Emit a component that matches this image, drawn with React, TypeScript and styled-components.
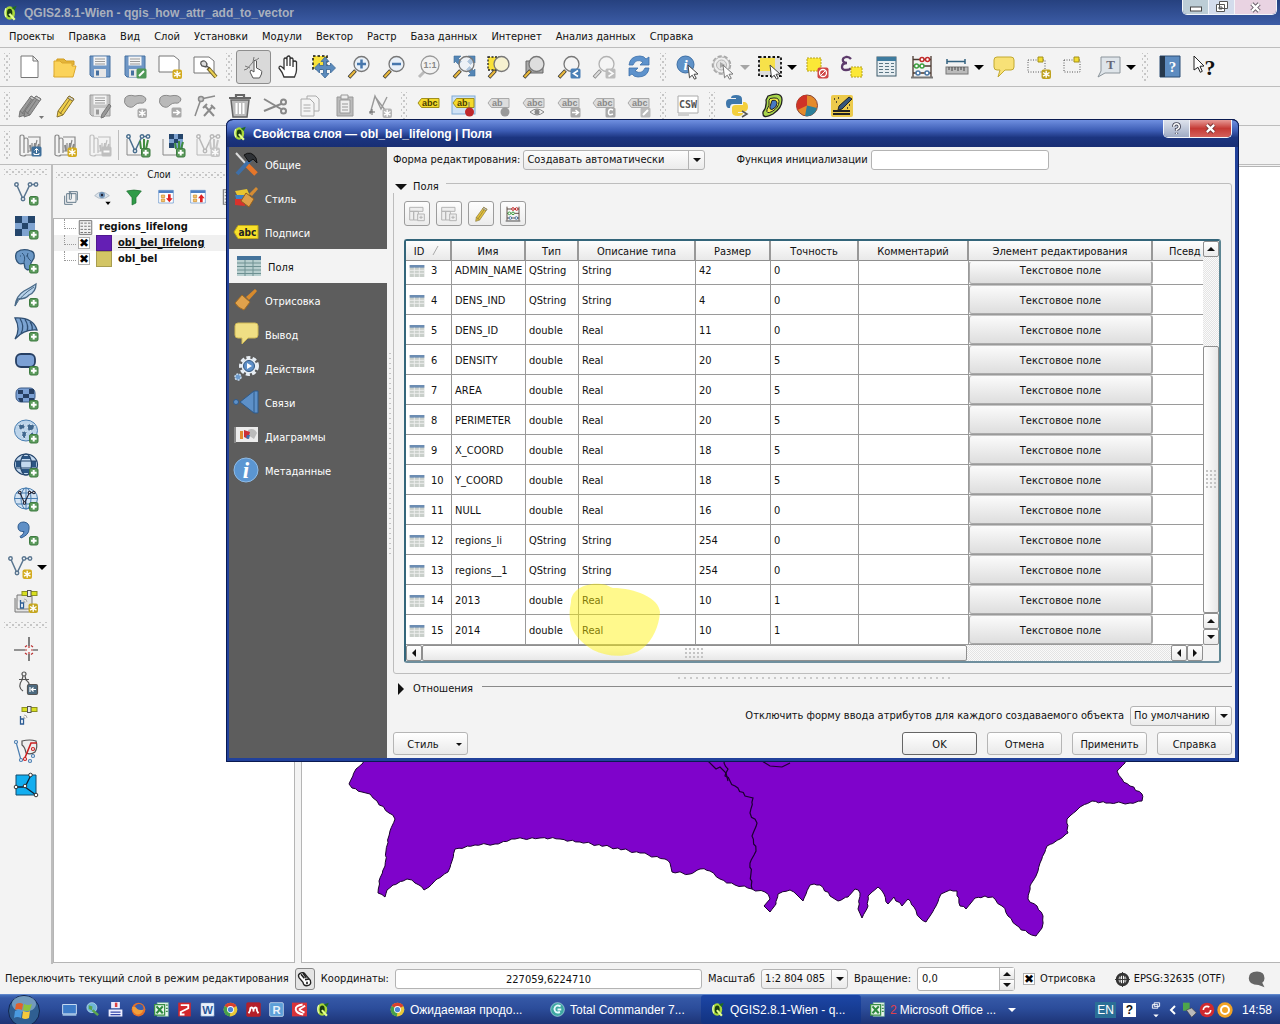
import React, { ReactNode } from "react";
import styled, { createGlobalStyle, css } from "styled-components";

const Global = createGlobalStyle`
  * { box-sizing: border-box; }
  body { margin: 0; background: #f3f3f3; }
  body, button, input, select {
    font-family: "DejaVu Sans Condensed", "DejaVu Sans", "Noto Sans", sans-serif;
    font-size: 11px;
    line-height: 14px;
    color: #111;
  }
  body { font-stretch: condensed; }
  button, input, select { font-stretch: inherit; margin: 0; }
`;

/* ---------- icon drawings, all on a 24 x 24 grid ---------- */

const Svg = styled.svg<{ $size?: number }>`
  width: ${(p) => p.$size ?? 24}px;
  height: ${(p) => p.$size ?? 24}px;
  flex: none;
  display: block;
  overflow: visible;
`;

const plus = (
  <g>
    <rect x="15.5" y="15.5" width="8.5" height="8.5" rx="1.5" fill="#5b9a5b" stroke="#3d7a40" />
    <path d="M19.7 17v5.6M17 19.8h5.6" stroke="#fff" strokeWidth="2" />
  </g>
);
const star = (c = "#d3ab1f") => (
  <g>
    <rect x="14.5" y="14.5" width="9.5" height="9.5" rx="2" fill={c} />
    <path d="M19.2 15.8v7M16 17.5l6.5 3.6M16 21.1l6.5-3.6" stroke="#fff" strokeWidth="1.4" />
  </g>
);
const badge = (c: string, inner: ReactNode) => (
  <g>
    <rect x="13.5" y="13.5" width="10" height="10" rx="1.5" fill={c} />
    {inner}
  </g>
);
const lens = (ring: string, fill: string, handle: string) => (
  <g>
    <path d="M8.5 15.5L2 22.500" stroke="#333" strokeWidth="3.600" />
    <path d="M8 16L2.500 22" stroke={handle} strokeWidth="2.200" />
    <circle cx="14.500" cy="9" r="7.500" fill={fill} stroke={ring} strokeWidth="1.300" />
  </g>
);
const cursor = <path d="M12 10l10 9-4 .3 2.300 4-1.800.9-2.300-4-2.700 2.600z" fill="#fff" stroke="#444" strokeWidth="1" />;
const abcTag = (fill: string, stroke: string, ink: string, text = "abc") => (
  <g>
    <path d="M1 9l3.500-4.500H22v9H4.500z" fill={fill} stroke={stroke} />
    <text x="5" y="12" fontSize="9" fontWeight="700" fontFamily="Liberation Sans, sans-serif" fill={ink}>{text}</text>
  </g>
);
const mapStack = (c: string) => (
  <g fill="none" stroke={c} strokeWidth="1.200">
    <path d="M2 22V4q0-2 2-2t2 2v16M6 7q0-2 2-2t2 2v13M2 22q4 2 6 0h12M10 4h12v14H10M14 17V10M17 16l2-9" />
    <path d="M13 18l-1-6M16 18l1-8M19 18l2-7" strokeWidth="2" />
  </g>
);
const vee = (c: string) => (
  <g fill="#fff" stroke={c} strokeWidth="1.500">
    <path d="M2.500 3.500L9 18 16 3.500h6" fill="none" />
    <circle cx="2.500" cy="3.500" r="1.700" /><circle cx="9" cy="18" r="1.700" />
    <circle cx="16" cy="3.500" r="1.700" /><circle cx="22" cy="3.500" r="1.700" />
  </g>
);
const sat = (
  <g>
    <rect x="8" y="2.500" width="15" height="4" fill="#d9e021" stroke="#8d9020" />
    <rect x="13.500" y="1.500" width="3.500" height="6" fill="#eee" stroke="#555" />
    <path d="M10 10q3 0 3 3M9 12q2 0 2 2" fill="none" stroke="#aaa" />
    <path d="M6.500 11v8h3v-5h-3" fill="#fff" stroke="#2d5c94" strokeWidth="1.300" />
  </g>
);
const pencil = (a: string, b: string) => (
  <g>
    <path d="M16 2l5 3-11 16-6 2 1-6z" fill={a} stroke={b} />
    <path d="M18 3.500L7 20M5 17l5 4" stroke={b} fill="none" />
    <path d="M16 2l5 3-1.500 2-5-3z" fill="#ccc" stroke={b} />
  </g>
);
const floppy = (a: string, b: string) => (
  <g>
    <path d="M2 1h20v21H4l-2-2z" fill={a} stroke={b} />
    <rect x="5.500" y="1.500" width="13" height="9" fill="#f4f4f4" />
    <path d="M7 4h10M7 6.500h10M7 9h10" stroke="#999" />
    <rect x="6" y="14" width="12" height="8" fill="#e6e6e6" /><rect x="8" y="15.500" width="3" height="5" fill={b} />
  </g>
);
const blob = <path d="M2 4q3-4 10-2 9-2 11 3-1 5-6 4-3 0-5 2-3 4-8 1-4-3-2-8z" fill="#b9b9b9" stroke="#8b8b8b" />;
const globe = (
  <g fill="none" stroke="#4a7eb0">
    <ellipse cx="12" cy="11.500" rx="11.500" ry="10.500" fill="#d3e3f3" />
    <ellipse cx="12" cy="11.500" rx="5" ry="10.500" /><path d="M0 11.500h24M2 6h20M2 17h20M12 1v21" />
  </g>
);
const checker = (
  <g>
    <path d="M1 1h20v20H1z" fill="#7fa3d0" />
    <path d="M1 1h7v7H1zM14 1h7v7h-7zM8 8h6v6H8zM1 14h7v7H1zM8 1h0z" fill="#24456b" />
  </g>
);
const abacus = (
  <g fill="none">
    <path d="M3 1v21M21 1v21M3 4.500h18M3 11h18M3 18h18" stroke="#4c3b32" strokeWidth="1.300" />
    <g fill="#fff" strokeWidth="1.500">
      <g stroke="#c22a2a"><circle cx="12" cy="4.500" r="2" /><circle cx="17.500" cy="4.500" r="2" /></g>
      <g stroke="#3fa041"><circle cx="6.500" cy="11" r="2" /><circle cx="12" cy="11" r="2" /></g>
      <g stroke="#4b78a6"><circle cx="8" cy="18" r="2" /><circle cx="17" cy="18" r="2" /></g>
    </g>
    <path d="M1 22.500h22" stroke="#777" strokeWidth="2" />
  </g>
);
const gridTable = (
  <g>
    <rect x="2" y="2" width="19" height="19" fill="#e7eef2" stroke="#3c5a6b" />
    <path d="M2 2h19v4H2z" fill="#3e7b9e" />
    <path d="M4 8.500h4M10 8.500h4M16 8.500h3M4 11.500h4M10 11.500h4M16 11.500h3M4 14.500h4M10 14.500h4M16 14.500h3M4 17.500h4M10 17.500h4M16 17.500h3" stroke="#5b7684" strokeWidth="1.200" />
  </g>
);
const balloon = <path d="M5 2h14q3 0 3 3v7q0 3-3 3h-6l-7 7 2-7H5q-3 0-3-3V5q0-3 3-3z" fill="#f8e177" stroke="#c2a92f" />;
const qgis = (
  <g>
    <ellipse cx="11.500" cy="12" rx="8" ry="10" fill="#a9d83a" />
    <ellipse cx="11.500" cy="12" rx="4" ry="6.500" fill="#1b3d12" />
    <path d="M6 5q-3 6 0 13" fill="none" stroke="#eaffb0" strokeWidth="2" />
    <path d="M11 13l8 9" stroke="#e4ff8c" strokeWidth="3.500" /><path d="M14 4l8-3-3 7z" fill="#1f6b23" />
  </g>
);
const chrome = (
  <g>
    <circle cx="12" cy="12" r="11" fill="#e8c93a" />
    <path d="M12 12L2.500 6.500A11 11 0 0 1 21.500 6.500z" fill="#d8402f" />
    <path d="M12 12L2.500 6.500A11 11 0 0 0 11 23z" fill="#47a04b" />
    <circle cx="12" cy="12" r="5.500" fill="#fff" /><circle cx="12" cy="12" r="4.200" fill="#4a84d8" />
  </g>
);
const letterTile = (bg: string, fg: string, t: string) => (
  <g>
    <rect x="1" y="1" width="22" height="22" rx="2" fill={bg} stroke={fg} />
    <text x="12" y="18.500" fontSize="18" fontWeight="700" textAnchor="middle" fontFamily="Liberation Sans, sans-serif" fill={fg}>{t}</text>
  </g>
);

const drawings: Record<string, ReactNode> = {
  qgis, pan: pencil("#f0cf4a", "#8a7430"), chrome, abacus, balloon,
  page: <path d="M3 1h12l5 5v16.500H3zM15 1v5h5" fill="#fff" stroke="#777" />,
  folder: <g><path d="M1 22L4 4h7l2 2h8v4" fill="#e4b63a" stroke="#d19c20" /><path d="M1 22V6h6l2 2h10v3h4l-3 11z" fill="#fbd35a" stroke="#dba72c" /></g>,
  save: floppy("#6f97c6", "#46709f"),
  saveAs: <g>{floppy("#6f97c6", "#46709f")}{badge("#4f9857", <path d="M16 21l5-5" stroke="#fff" strokeWidth="2" />)}</g>,
  composerNew: <g><path d="M1 1h15l5 4v12H1z" fill="#fff" stroke="#777" />{star()}</g>,
  composer: <g><path d="M1 2h15l5 4v12H1z" fill="#fff" stroke="#777" /><path d="M8 7q4-3 6 2l-1 3-4-1q-2-2-1-4zM14 11l3 3" fill="#ddd" stroke="#555" strokeWidth="1.300" /><path d="M15 13l8 9" stroke="#6a5a25" strokeWidth="4" /><path d="M16 14l7 8" stroke="#e9cf52" strokeWidth="2" /></g>,
  touch: <g fill="#fff" stroke="#555"><path d="M11 23l-3-6 1-2 3 2V6q1-2 2.500 0v7l4 2q2 1 1 4l-2 4z" /><path d="M2 15l3-1 6-7 1-5M8 13L3 11M13 6l4-3" fill="none" stroke="#777" /></g>,
  hand: <path d="M7 22q-1-4-5-9 0-3 3-1l2 2V4q1-2 3 0V2q2-2 3 0v2q2-2 3 0v3q2-2 3.500 0V15q0 3-2 7z M10 4v7M13 4v7M16 6v6" fill="#fff" stroke="#333" strokeWidth="1.300" />,
  panSel: <g><path d="M1 1h14v13H1z" fill="#f8e13a" stroke="#111" strokeDasharray="2.500 2" strokeWidth="1.500" /><path d="M13 2l4 4.500h-2.500v4h4V8l5 5-5 5v-3.500h-4v4H17l-4 4.500-4-4.500h2.500v-4h-4V18l-5-5 5-5v2.500h4v-4H9z" fill="#5b8bbd" stroke="#3b6796" strokeWidth=".8" /></g>,
  zoomIn: <g>{lens("#777", "#e9f0f8", "#e9b83c")}<path d="M14.500 4.500v9M10 9h9" stroke="#4777ad" strokeWidth="2.500" /></g>,
  zoomOut: <g>{lens("#777", "#e9f0f8", "#e9b83c")}<path d="M10 9h9" stroke="#4777ad" strokeWidth="2.500" /></g>,
  zoom1: <g><path d="M8 16L2 22" stroke="#bbb" strokeWidth="3" /><circle cx="13" cy="10" r="9" fill="#f2f2f2" stroke="#999" strokeWidth="1.300" /><text x="13" y="13" fontSize="9" fontWeight="700" textAnchor="middle" fontFamily="Liberation Sans, sans-serif" fill="#888">1:1</text></g>,
  zoomFull: <g><path d="M2 1h7L6.500 3.500l3 3-3 3-3-3L2 8zM23 1h-7l2.500 2.500-3 3 3 3 3-3L23 8zM23 21h-7l2.500-2.500-4-4 3-3 4 4L23 14z" fill="#5486b6" stroke="#3c6b98" strokeWidth=".6" />{lens("#777", "#e9f0f899", "#e9b83c")}</g>,
  zoomSel: <g><path d="M1 2h12v13H1z" fill="#f8e13a" stroke="#222" strokeDasharray="2 1.500" strokeWidth="1.300" />{lens("#777", "#f6f1d0", "#e9b83c")}</g>,
  zoomLayer: <g><path d="M4 6h17v12H4z" fill="#aaa" stroke="#666" />{lens("#777", "#dedede", "#e9b83c")}</g>,
  zoomLast: <g>{lens("#777", "#f4f4f4", "#e9b83c")}{badge("#4a7fb5", <path d="M21 15.500l-4.500 3 4.500 3" stroke="#fff" strokeWidth="1.600" fill="none" />)}</g>,
  zoomNext: <g opacity=".6">{lens("#888", "#f7f7f7", "#ccc")}{badge("#999", <path d="M16.500 15.500l4.500 3-4.500 3" stroke="#fff" strokeWidth="1.600" fill="none" />)}</g>,
  refresh: <g fill="#5d92cc" stroke="#3d70aa" strokeWidth=".8"><path d="M2 10Q3 1 13 1q4 0 6 3l3-2v8h-9l3-3q-7-4-10 3z" /><path d="M22 13q-1 9-11 9-4 0-6-3l-3 2v-8h9l-3 3q7 4 10-3z" /></g>,
  identify: <g><circle cx="9.500" cy="9.500" r="8.500" fill="#5f92c8" stroke="#3b6ea5" /><text x="9.500" y="15" fontSize="15" fontStyle="italic" fontWeight="700" textAnchor="middle" fontFamily="Liberation Serif, serif" fill="#fff">i</text>{cursor}</g>,
  gear: <g opacity=".7"><circle cx="10.500" cy="10" r="8.500" fill="none" stroke="#888" strokeWidth="2.500" strokeDasharray="4 2" /><circle cx="10.500" cy="10" r="8" fill="#eee" stroke="#999" /><circle cx="10.500" cy="10" r="5" fill="#ddd" stroke="#999" /><path d="M9 7l5 3-5 3z" fill="#888" />{cursor}</g>,
  select: <g><path d="M1 2h22v19H1z" fill="#ddd" stroke="#111" strokeDasharray="2.500 2" strokeWidth="1.800" /><path d="M2 3h15v13H2z" fill="#f7e14a" />{cursor}</g>,
  deselect: <g><path d="M2 3h14v13H2z" fill="#fbe837" stroke="#b5a01f" strokeDasharray="2 1" /><rect x="12.500" y="12.500" width="11" height="11" rx="2" fill="#cf4444" /><circle cx="18" cy="18" r="3.500" fill="none" stroke="#fff" strokeWidth="1.300" /><path d="M15.500 20.500l5-5" stroke="#fff" /></g>,
  expr: <g><path d="M11 4Q9 1.500 6 2 2 3 3 6q1 2 4 2-5 0-5 4 0 3 4 3 4 0 5-2" fill="none" stroke="#5d3b6b" strokeWidth="2.300" /><path d="M11 12h11v10H11z" fill="#fbe837" stroke="#b5a01f" strokeDasharray="2 1" /></g>,
  table: gridTable,
  measure: <g><path d="M2 6.500h18M2 4v5M20 4v5" stroke="#33617f" strokeWidth="1.500" /><rect x="1" y="12" width="22" height="7" fill="#bbb" stroke="#777" /><path d="M4 12v3M7 12v4M10 12v3M13 12v4M16 12v3M19 12v4" stroke="#444" /></g>,
  bookmarkNew: <g><path d="M1 5h17v12H1z" fill="none" stroke="#555" strokeDasharray="1 1.500" /><path d="M11 2h5v5h-5z" fill="#f2dc30" stroke="#a28f1b" />{star("#bfa220")}</g>,
  bookmark: <g><path d="M2 5h16v12H2z" fill="none" stroke="#555" strokeDasharray="1 1.500" /><path d="M12 2h5v5h-5z" fill="#f2dc30" stroke="#a28f1b" /></g>,
  textNote: <g><path d="M4 2h19v16H8l-7 4 3-6z" fill="#dfe5ea" stroke="#8b949b" /><text x="13.500" y="14" fontSize="13" fontWeight="700" textAnchor="middle" fontFamily="Liberation Serif, serif" fill="#667">T</text></g>,
  book: <g><path d="M2 1h20v21H2z" fill="#5d8cc0" stroke="#2d4f77" /><path d="M2 1h5v21H2z" fill="#26384c" /><text x="14.500" y="17" fontSize="15" fontWeight="700" textAnchor="middle" fontFamily="Liberation Serif, serif" fill="#fff">?</text></g>,
  whats: <g><path d="M1 1l10 10-4 .3 2.300 5-2 1-2.300-5L1 15z" fill="#fff" stroke="#222" /><text x="17" y="20" fontSize="22" fontWeight="700" textAnchor="middle" fontFamily="Liberation Serif, serif" fill="#111">?</text></g>,

  pencils: <g><g transform="translate(-3 0)">{pencil("#999", "#777")}</g><g transform="translate(2 0)">{pencil("#999", "#777")}</g><path d="M21 22h5l-2.500 3z" fill="#777" /></g>,
  saveEdit: <g>{floppy("#c4c4c4", "#999")}<path d="M21 10l2 2-7 11-3 1 1-4z" fill="#999" stroke="#777" /></g>,
  addFeat: <g>{blob}{star("#aaa")}</g>,
  moveFeat: <g>{blob}{badge("#aaa", <path d="M15 18.500h6M18.500 16l3 2.500-3 2.500" stroke="#fff" strokeWidth="1.500" fill="none" />)}</g>,
  node: <g fill="none" stroke="#8c8c8c" strokeWidth="1.500"><path d="M2 22L8 5l14-3" /><circle cx="8" cy="5" r="2.500" fill="#ccc" /><path d="M12 12l9 10M20 12l-9 10M10 14l4-4M18 11l4 4" strokeWidth="2" /></g>,
  trash: <g fill="#bbb" stroke="#666" strokeWidth="1.500"><path d="M3 6h18l-2 17H5z" /><path d="M1 4h22M8 3V1h8v2" fill="none" strokeWidth="2.200" /><path d="M8.500 9v11M12 9v11M15.500 9v11" stroke="#fff" strokeWidth="2" /></g>,
  cut: <g fill="none" stroke="#888" strokeWidth="2"><path d="M1 5l17 10M1 17l17-7" /><circle cx="20.500" cy="8" r="2.500" /><circle cx="20.500" cy="17" r="2.500" /></g>,
  copy: <g fill="#f4f4f4" stroke="#aaa"><path d="M9 2h9l3 3v12H9z" /><path d="M3 5h9l4 4v13H3zM5.500 11h7M5.500 14h7M5.500 17h7" /></g>,
  paste: <g fill="#eee" stroke="#999"><path d="M4 3h16v19H4z" fill="#bbb" /><path d="M7 6h10v13H7zM9 10h6M9 13h6M9 16h6" /><path d="M8 1h7v4H8z" /></g>,
  vecGrey: <g><path d="M2 20L7 2l6 13 6-12M8 4l12 16" fill="none" stroke="#999" strokeWidth="1.400" /><path d="M1 18h6M4 15v6" stroke="#666" />{star("#b5b5b5")}</g>,
  abc: abcTag("#f4da2c", "#a08f1c", "#4a3d00"),
  abcPin: <g><rect x="0" y="2" width="23" height="18" fill="#cfe2f5" stroke="#7fa9d3" />{abcTag("#f4da2c", "#a08f1c", "#4a3d00", "ab")}<path d="M17 8v8" stroke="#777" /><circle cx="17.500" cy="18" r="4.500" fill="#c0282b" /></g>,
  abcG1: <g>{abcTag("#ddd", "#aaa", "#888", "ab")}<circle cx="18" cy="18" r="4.500" fill="#999" /></g>,
  abcG2: <g>{abcTag("#ddd", "#aaa", "#888")}<path d="M8 18q7-6 14 0-7 6-14 0z" fill="#eee" stroke="#888" /><circle cx="15" cy="18" r="2.500" fill="#888" /></g>,
  abcG3: <g>{abcTag("#ddd", "#aaa", "#888")}{badge("#aaa", <path d="M15 18.500h6M18.500 16l3 2.500-3 2.500" stroke="#fff" strokeWidth="1.500" fill="none" />)}</g>,
  abcG4: <g>{abcTag("#ddd", "#aaa", "#888")}{badge("#aaa", <path d="M21 16q-4-2-4.500 2t4.500 2" stroke="#fff" strokeWidth="1.500" fill="none" />)}</g>,
  abcG5: <g>{abcTag("#ddd", "#aaa", "#888")}{badge("#bbb", <path d="M16 21l5-5" stroke="#fff" strokeWidth="2" />)}</g>,
  csw: <g><path d="M2 2h20v17H2z" fill="#fff" stroke="#aaa" /><path d="M2 21h11" stroke="#aaa" /><text x="12" y="14" fontSize="10" fontWeight="700" textAnchor="middle" fontFamily="DejaVu Sans Mono, monospace" fill="#555">CSW</text></g>,
  python: <g><path d="M11 1q6 0 6 4v5H8q-3 0-3 4H3q-2-1-2-5t4-4h6V4H6q0-3 5-3z" fill="#3f77ab" /><path d="M13 22q-6 0-6-4v-5q1-2 3-2h8V8h2q3 1 3 5t-4 5h-6v1h5q0 3-5 3z" fill="#f3cf3d" /><path d="M17 17l5 3-5 3" fill="none" stroke="#555" strokeWidth="1.500" /></g>,
  heat: <g><path d="M8 2q14-5 14 4 0 8-9 14-11 6-10-2 4-5 3-12z" fill="#a9d64a" stroke="#222" strokeWidth="1.300" /><path d="M10 4.500q9-2 9 3 0 6-7 10-6 3-5-2 3-4 2-9z" fill="#f5ed4b" stroke="#222" /><path d="M12 6.500q5-1 5 3t-5 6q-3 0-2-3z" fill="#4779c4" stroke="#222" /></g>,
  pie: <g><circle cx="12" cy="11.500" r="10.500" fill="#e48a2b" stroke="#843" /><path d="M12 11.500V1A10.500 10.500 0 0 0 2.500 16z" fill="#cf3327" /><path d="M12 11.500L22 14A10.500 10.500 0 0 1 10 22z" fill="#2c7f99" /></g>,
  field: <g><rect x="1" y="1" width="22" height="22" rx="2" fill="#ecca4b" /><path d="M3 17h17M3 20h17" stroke="#222" strokeWidth="2" /><path d="M19 3l3 2-10 10-4 1 1-4z" fill="#35567d" stroke="#222" /><path d="M4 5h1M8 4h1M6 8h1M19 11h1M17 14h1" stroke="#222" strokeWidth="1.500" /></g>,

  mapA: <g>{mapStack("#888")}{badge("#3f6f9a", <path d="M16 20v1.500h5V20M18.500 20v-4M16.500 17.500l2-2 2 2" stroke="#fff" fill="none" />)}</g>,
  mapB: <g>{mapStack("#888")}{star()}</g>,
  mapC: <g opacity=".7">{mapStack("#aaa")}{badge("#aaa", <path d="M15.500 18.500h6" stroke="#fff" strokeWidth="2" />)}</g>,
  grassV: <g><path d="M1 6v16h14" fill="none" stroke="#888" />{vee("#4a6f8e")}<path d="M15 16l-1-8M18 16V6M20 16l2-9" stroke="#3f8c3f" strokeWidth="2" />{plus}</g>,
  grassR: <g><path d="M2 6v16h14" fill="none" stroke="#888" /><path d="M8 1h14v14H8z" fill="#7fa3d0" /><path d="M8 1h5v5H8zM17 1h5v5h-5zM13 6h4v4h-4zM8 10h5v5H8z" fill="#24456b" /><path d="M15 16l-1-6M18 16V8M20 16l2-7" stroke="#3f8c3f" strokeWidth="2" />{plus}</g>,
  grassG: <g opacity=".8"><path d="M1 6v16h14" fill="none" stroke="#aaa" />{vee("#aaa")}<path d="M15 16l-1-8M18 16V6M20 16l2-9" stroke="#bbb" strokeWidth="2" />{star("#bbb")}</g>,

  vector: <g>{vee("#5a7690")}{plus}</g>,
  raster: <g>{checker}{plus}</g>,
  postgis: <g><path d="M3 3q6-4 14-1 4 1 3 7l-3 5-1 6q-3 2-5-1l-1-5q-6 3-8-4-1-5 1-7z" fill="#6b98c6" stroke="#2f5377" strokeWidth="1.300" /><path d="M8 4q4 3 2 9M14 4q-2 4 3 8M6 7h1M12 7h1" fill="none" stroke="#2f5377" /></g>,
  feather: <g><path d="M1 23q1-10 9-15 6-3 12-7 0 8-7 11-3 4-11 4z" fill="#b9d3ea" stroke="#4a6a88" strokeWidth="1.300" /><path d="M1 23Q7 12 20 4" fill="none" stroke="#4a6a88" /></g>,
  mssql: <path d="M1 1q18-1 22 12-13-1-22 9 6-10 0-21zM6 1.500q5 8 1 15M11 2.500q4 6 2 12M16 5q3 4 2 8" fill="#7ca4d2" stroke="#2f4f73" strokeWidth="1.300" />,
  oracle: <rect x="2" y="3" width="19" height="13" rx="5" fill="#7ba0d4" stroke="#263f63" strokeWidth="1.800" />,
  georaster: <g><rect x="2" y="3" width="19" height="14" rx="5" fill="#7ba0d4" stroke="#3b5a86" /><path d="M4 5h5v4H4zM15 4h5v5h-5zM9 9h6v4H9zM4 13h5v4H6zM15 13h5v2l-2 2h-3z" fill="#263f63" /></g>,
  wms: <g><ellipse cx="12" cy="11.500" rx="11.500" ry="10.500" fill="#bcd4ea" stroke="#4a7eb0" /><path d="M4 6l6-1 1 4-5 2zM13 5l8 1-2 5-5 1zM8 12l5 1-2 7-3-3zM16 13l4 1-2 4z" fill="#40678e" stroke="#d9e7f4" strokeDasharray="2 1" /></g>,
  wcs: <g><ellipse cx="12" cy="11.500" rx="11.500" ry="10.500" fill="#c3d8ee" /><path d="M8 3h8v3H8zM2 8h5v6H2zM17 8h5v6h-5zM8 16h8v4H8z" fill="#2b5583" /><g fill="none" stroke="#24456b" strokeWidth="1.200"><ellipse cx="12" cy="11.500" rx="11.500" ry="10.500" /><ellipse cx="12" cy="11.500" rx="5.500" ry="10.500" /><path d="M1 8h22M1 15h22" /></g></g>,
  wfs: <g>{globe}<g transform="translate(4 3) scale(.72)">{vee("#223")}</g></g>,
  comma: <path d="M4 6q0-5 6-5 6 1 5 7 0 6-8 9l-1-1.500q4-2 4-5Q4 11 4 6z" fill="#5f8fc6" stroke="#2f5c8f" />,
  newShape: <g>{vee("#5a7690")}{star()}</g>,
  gpsNew: <g><path d="M3 6h15v14H3zM1 9v14h14" fill="#e3e3e3" stroke="#777" />{sat}{star("#c5a620")}</g>,
  cross: <g fill="none" strokeWidth="1.200"><path d="M15 0v9M15 17v7M0 13h11M19 13h5" stroke="#333" /><path d="M15 9v2M15 15v2M11 13h2M17 13h2M11 10l2-1.500M19 10l-2-1.500M11 16l2 1.500M19 16l-2 1.500" stroke="#b33" /></g>,
  caliper: <g fill="none" stroke="#555" strokeWidth="1.200"><circle cx="10" cy="3" r="2" /><path d="M9 5l-1 4M11 5l1 4M5 8.500h10M8 9q-5 7 1 11M12 9q4 3 3 6" />{badge("#4c6a80", <path d="M16 16v5M22 18.500h-4M19.500 16.500l-2 2 2 2" stroke="#fff" />)}</g>,
  gps: sat,
  topo: <g fill="#fff" strokeWidth="1.200"><path d="M2 3l5 18" stroke="#4a7db0" /><path d="M8 2q8-2 14 0 2 6-1 11-4 3-9 1-1-6-4-8z" fill="#eee" stroke="#555" /><path d="M10 21l7-17h6M12 21" stroke="#c22" fill="none" strokeWidth="1.600" /><g stroke="#4a7db0"><circle cx="2" cy="3" r="1.500" /><circle cx="7" cy="21" r="1.500" /><circle cx="19" cy="17" r="1.500" /><circle cx="16" cy="22" r="1.500" /></g><g stroke="#c22"><circle cx="11" cy="20" r="1.500" /><circle cx="19" cy="10" r="1.500" /></g></g>,
  topology: <g><path d="M2 2h20v20H2z" fill="#12aef0" stroke="#124a6b" /><path d="M2 14h9l6-12M11 14l11 8" stroke="#123" strokeWidth="1.300" fill="none" /><g fill="#fff" stroke="#333"><circle cx="2" cy="14" r="1.800" /><circle cx="11" cy="13" r="1.800" /><circle cx="16.500" cy="2" r="1.800" /><circle cx="22" cy="22" r="1.800" /></g></g>,

  group: <path d="M7 7h14v13H7zM4 10v13h12M10 4h13v13M11 16V6q1-3 3 0v8q0 2-1.500 2" fill="none" stroke="#667c8c" strokeWidth="1.500" />,
  eye: <g><path d="M1 10q10-11 22 0-11 9-22 0z" fill="#dce3ea" stroke="#9aa8b5" /><circle cx="12" cy="9" r="4.500" fill="#6f93b8" /><circle cx="12" cy="9" r="1.800" fill="#223" /><path d="M17 19h8l-4 5z" fill="#000" /></g>,
  funnel: <path d="M1 3q11-3 22 0l-8 10v8l-6 3V13z" fill="#2f9b48" stroke="#1b6b2d" />,
  expand: <g><path d="M1 2h22v19H1z" fill="#fff" stroke="#5f8fcc" /><path d="M1 2h22v4H1z" fill="#4d7fc2" /><path d="M5 9h5v4H5zM5 15h5v4H5z" fill="#f6c46b" stroke="#c88a2b" /><path d="M15 8h4v6h3l-5 6-5-6h3z" fill="#e02222" /></g>,
  collapse: <g><path d="M1 2h22v19H1z" fill="#fff" stroke="#5f8fcc" /><path d="M1 2h22v4H1z" fill="#4d7fc2" /><path d="M5 9h5v4H5zM5 15h5v4H5z" fill="#f6c46b" stroke="#c88a2b" /><path d="M15 20h4v-6h3l-5-6-5 6h3z" fill="#e02222" /></g>,
  sheet: <path d="M2 1h20v22H2zM4 5h4M10 5h4M16 5h4M4 10h4M10 10h4M16 10h4M4 15h4M10 15h4M16 15h4M4 20h4M10 20h4M16 20h4" fill="#f1f1f1" stroke="#777" strokeWidth="1.600" />,

  tools: <g><path d="M2 1l10 11" stroke="#ddd" strokeWidth="2" /><path d="M13 13l9 9" stroke="#e5762a" strokeWidth="5" /><path d="M17 7L3 22" stroke="#3e6fa8" strokeWidth="4" /><path d="M10 3q7-5 12 3l1 5-4-4-4 3z" fill="#2f3236" stroke="#111" /></g>,
  brush: <g><path d="M1 5l12-2 3 7-4 3-11 1 3-3z" fill="#e8c531" /><path d="M1 9l9 0 3 4-10 3z" fill="#3c7fc5" /><path d="M1 13l9 0 1 7-10-1z" fill="#d8322c" /><path d="M22 1l2 2-6 7-3-2z" fill="#d58b33" /><path d="M12 7l8 6-5 8-8-6z" fill="#dea04a" stroke="#93601f" /></g>,
  abcBig: <g><path d="M0 12l4-6.500h20v13H4z" fill="#f8e02a" stroke="#bfa91b" /><text x="4.500" y="15.500" fontSize="10" fontWeight="700" fontFamily="DejaVu Sans, sans-serif" fill="#222">abc</text></g>,
  fields: <g><path d="M0 2h24v20H0z" fill="#b8cfcf" /><path d="M0 2h24v4H0z" fill="#44739b" /><path d="M0 9h24M0 12.500h24M0 16h24M0 19.500h24M8 6v16M16 6v16" stroke="#6e9192" /></g>,
  broom: <g><path d="M21 1l2 2-8 9-3-3z" fill="#d88a2c" /><path d="M8 7l8 7-6 8Q4 20 1 15z" fill="#e0a24c" stroke="#a06a22" /></g>,
  bubble: <g><path d="M4 1h17q3 0 3 3v9q0 3-3 3h-7l-6 6 0-6H4q-3 0-3-3V4q0-3 3-3z" fill="#f0df84" stroke="#cfb956" /></g>,
  actions: <g><circle cx="15" cy="10" r="8.500" fill="none" stroke="#e8eef4" strokeWidth="3" strokeDasharray="4 2.200" /><circle cx="15" cy="10" r="7.500" fill="#e8eef4" /><circle cx="15" cy="10" r="5.500" fill="#5d8fc8" stroke="#33567e" /><path d="M13 7l5 3-5 3z" fill="#fff" /><circle cx="4" cy="21" r="3" fill="#6d9bcd" stroke="#c5d8ea" strokeWidth="1.500" strokeDasharray="2 1" /></g>,
  joins: <g fill="#5d90c8" stroke="#2f5a8a"><path d="M6 12L20 1h4v22h-4z" /><path d="M20 1v22" /><circle cx="2" cy="12" r="2.500" /></g>,
  diagrams: <g><path d="M1 3h23v15H1z" fill="#ececec" /><path d="M14 6q6-3 9 3l-3 6-6-4z" fill="#bbb" /><path d="M6 7h3v8H6z" fill="#e28a2f" /><path d="M10 6l6 2-2 7-4-2z" fill="#cb3038" /><path d="M13 11l3 0-1 4-3-1z" fill="#3a70b0" /><path d="M1 3v16" stroke="#888" strokeWidth="2" /></g>,
  info: <g><circle cx="12" cy="12" r="12" fill="#5b96d2" stroke="#8fbbe6" /><text x="12" y="20" fontSize="23" fontStyle="italic" fontWeight="700" textAnchor="middle" fontFamily="Liberation Serif, serif" fill="#fff">i</text></g>,
  pencil: pencil("#e3c13b", "#877538"),
  colGrey: <g fill="#eee" stroke="#b5b5b5" strokeWidth="1.500"><path d="M1 2h20v6H1zM1 8h6v13H1zM7 8h7v13H7z" /><path d="M13 12h10v10H13zM15.500 17h5M18 14.500v5" /></g>,
  rowIcon: <g><path d="M1 3h22v18H1z" fill="#c9cfca" /><path d="M1 3h22v4H1z" fill="#6c8db3" /><path d="M1 11h22M1 15.500h22M8 7v14M15.500 7v14" stroke="#f3f3f3" strokeWidth="1.200" /></g>,

  mouse: <g><path d="M4 4q6-4 9 2l7 8q2 7-4 8-6 1-7-5L3 10q-2-4 1-6z" fill="#fff" stroke="#222" strokeWidth="2" /><path d="M6 5l5 6M9 3l5 7M12 13l6-1M15 16v4" stroke="#222" strokeWidth="2.500" /></g>,
  crs: <g fill="none" stroke="#333"><circle cx="12" cy="12" r="8.500" strokeWidth="4.500" /><ellipse cx="12" cy="12" rx="4" ry="8" strokeWidth="1.500" /><path d="M0 12h24M12 0v24" strokeWidth="1.500" /></g>,
  chat: <path d="M12 2q10 0 10 9 0 4-3 6l3 6-8-3q-13 0-13-9 0-9 11-9z" fill="#666" />,

  monitor: <g><path d="M1 4h22v15H1z" fill="#3d7cc9" stroke="#cfe1f5" strokeWidth="1.500" /><path d="M1 19h22v3H1z" fill="#9fc0e2" /></g>,
  net: <g><circle cx="11" cy="9" r="8" fill="#6fb6d8" stroke="#d4ecf5" /><path d="M6 5l6 2-1 6-5-2z" fill="#5aa64d" /><path d="M12 13l9 8" stroke="#5aa64d" strokeWidth="4" /></g>,
  disk: <g><path d="M5 0h14v10H5zM1 12h22v11H1z" fill="#eef" /><path d="M11 1h4v7h-4z" fill="#d44" /><path d="M4 16h16M4 20h16" stroke="#3346a8" strokeWidth="2" /></g>,
  firefox: <g><circle cx="12" cy="12" r="11" fill="#e5702a" /><circle cx="13" cy="10" r="7" fill="#3a5fae" /><path d="M2 8q5-2 8 3 4 3 10 1-3 9-11 8-7-3-7-12z" fill="#f2a13b" /></g>,
  excel: <g><path d="M5 1h18v22H5z" fill="#e9f5ea" stroke="#6a9" /><path d="M19 5h3M19 10h3M19 15h3" stroke="#3a8a4d" strokeWidth="2" /><path d="M1 4h16v17H1z" fill="#e9f5ea" stroke="#3b9048" strokeWidth="2" /><path d="M4 7l10 11M14 7L4 18" stroke="#2f8a3f" strokeWidth="3.500" /></g>,
  pdf: <g><path d="M2 1h20v22H2z" fill="#d3262b" /><path d="M6 5h12v5L6 16v4h6" fill="none" stroke="#fff" strokeWidth="3" /></g>,
  word: letterTile("#e9f0fb", "#2a5699", "W"),
  mendeley: letterTile("#b5202a", "#b5202a", "M"),
  rlang: letterTile("#5d9fd8", "#5d9fd8", "R"),
  cbox: letterTile("#d8333a", "#d8333a", "C"),
  commander: <g><circle cx="12" cy="12" r="11" fill="#3fa8a2" stroke="#bfe6e8" /><path d="M17 7q-8-4-10 4 1 8 9 5M12 12h6" fill="none" stroke="#e8fbff" strokeWidth="3" /></g>,
  usb: <g><path d="M3 1h10v12H3z" fill="#4ea64b" /><path d="M8 12l8-3 7 7-7 7z" fill="#bbb" stroke="#444" /></g>,
  redRing: <g><circle cx="12" cy="12" r="11" fill="#cf2a2f" /><circle cx="12" cy="12" r="5.500" fill="none" stroke="#fff" strokeWidth="2.500" strokeDasharray="12 5" /></g>,
  orangeRing: <g><circle cx="12" cy="12" r="11.500" fill="#f2a325" /><circle cx="12" cy="12" r="6" fill="none" stroke="#fff" strokeWidth="3" /></g>,
};
const whiteGlyph = (d: string) => <path d={d} fill="none" stroke="#fff" strokeWidth="3" />;
drawings.mendeley = <g>{drawings.mendeley}{whiteGlyph("M4 18q3-3 3-8 3-3 5 2 2-5 5-2 0 5 3 8M12 12v3")}</g>;
drawings.rlang = letterTile("#5d9fd8", "#e8f2fb", "R");
drawings.cbox = <g><rect x="0" y="1" width="24" height="22" fill="#d8333a" />{whiteGlyph("M17 4Q5 6 6 12t12 8M11 12l10-6M11 12l9 5")}</g>;

const Icon = ({ name, size }: { name: string; size?: number }) => (
  <Svg viewBox="0 0 24 24" $size={size} aria-hidden="true">{drawings[name]}</Svg>
);

/* ---------- main window ---------- */

const Shell = styled.div`
  position: relative;
  min-height: 100vh;
  display: flex;
  flex-direction: column;
  background: #f3f3f3;
  overflow: hidden;
`;
const AppTitle = styled.header`
  height: 25px;
  display: flex;
  align-items: center;
  gap: 6px;
  padding-left: 2px;
  background: linear-gradient(#26417f, #3c5ca6);
  color: #a9b0bd;
  font: bold 12px/16px "Liberation Sans", sans-serif;
`;
const WinButtons = styled.div`
  align-self: flex-start;
  margin-left: auto;
  margin-right: 3px;
  display: flex;
  border: 1px solid #f2f5fa;
  border-top: 0;
  border-radius: 0 0 5px 5px;
  overflow: hidden;
`;
const WinButton = styled.button<{ $w: number; $h: number; $bg: string }>`
  width: ${(p) => p.$w}px;
  height: ${(p) => p.$h}px;
  padding: 0;
  display: grid;
  place-items: center;
  border: 0;
  background: ${(p) => p.$bg};
  & + & { border-left: 1px solid #f2f5fa; }
`;
const MenuBar = styled.nav`
  height: 23px;
  display: flex;
  align-items: center;
  gap: 14px;
  padding: 2px 9px 0;
  border-bottom: 1px solid #bdbdbd;
`;
const MenuItem = styled.button`
  border: 0;
  padding: 0;
  background: none;
  white-space: nowrap;
`;
const ToolRow = styled.div`
  height: 39px;
  display: flex;
  align-items: center;
  border-bottom: 1px solid #bdbdbd;
  overflow: hidden;
`;
const dots = css`
  background-image: radial-gradient(circle, #c6c6c6 1px, transparent 1px), radial-gradient(circle, #c6c6c6 1px, transparent 1px);
  background-size: 6px 6px;
  background-position: 0 0, 3px 3px;
`;
const Grip = styled.span`
  flex: none;
  width: 6px;
  height: 28px;
  margin: 0 4px;
  ${dots}
`;
const LeadGrip = styled(Grip)`margin: 0 2px 0 4px;`;
const ToolButton = styled.button<{ $pressed?: boolean }>`
  flex: none;
  width: 35px;
  height: 34px;
  padding: 0;
  display: grid;
  place-items: center;
  border: 1px solid ${(p) => (p.$pressed ? "#8e8e8e" : "transparent")};
  border-radius: 3px;
  background: ${(p) => (p.$pressed ? "#d9d9d9" : "none")};
`;
const Drop = styled.button<{ $muted?: boolean }>`
  flex: none;
  width: 12px;
  height: 34px;
  padding: 0;
  border: 0;
  background: none;
  display: grid;
  place-items: center start;
  &::after {
    content: "";
    border: 5px solid transparent;
    border-top-color: ${(p) => (p.$muted ? "#a5a5a5" : "#000")};
    border-bottom: 0;
  }
`;
const Divider = styled.span`
  width: 1px;
  height: 30px;
  margin: 0 1px;
  background: #bdbdbd;
`;

const Main = styled.main`
  flex: 1;
  display: flex;
  min-height: 0;
`;
const SideTools = styled.div`
  flex: none;
  width: 53px;
  display: flex;
  flex-direction: column;
  border-right: 2px solid #bdbdbd;
`;
const SideGrip = styled.span`
  height: 6px;
  margin: 4px;
  flex: none;
  ${dots}
  &:first-child { margin-bottom: 1px; }
`;
const SideRow = styled.div`
  height: 34px;
  display: flex;
  align-items: center;
  justify-content: center;
`;
const Layers = styled.section`
  flex: none;
  width: 242px;
  display: flex;
  flex-direction: column;
`;
const LayersTitle = styled.h2`
  height: 20px;
  margin: 0;
  padding: 0 33px 0 3px;
  display: flex;
  align-items: center;
  gap: 8px;
  font-size: 10px;
  font-weight: 400;
  &::before, &::after { content: ""; flex: 1; height: 6px; ${dots} }
`;
const LayerTools = styled.div`
  height: 33px;
  display: flex;
  padding: 0 0 10px 1px;
  align-items: center;
`;
const LayerTool = styled.button`
  width: 32px;
  height: 22px;
  padding: 0;
  border: 0;
  background: none;
  display: grid;
  place-items: center;
`;
const Tree = styled.ul`
  flex: 1;
  margin: 0 0 1px;
  padding: 0;
  list-style: none;
  background: #fff;
  border: 1px solid #b5b5b5;
`;
const TreeRow = styled.li<{ $active?: boolean }>`
  height: 16px;
  display: flex;
  align-items: center;
  gap: 6px;
  padding-left: 10px;
  font-weight: 700;
  background: ${(p) => (p.$active ? "#f0f0f0" : "none")};
  &::before {
    content: "";
    width: 11px;
    height: 9px;
    align-self: flex-start;
    margin-right: -4px;
    border: 1px dotted #999;
    border-width: 0 0 1px 1px;
  }
  label { text-decoration: ${(p) => (p.$active ? "underline" : "none")}; }
`;
const Tick = styled.input`
  appearance: none;
  flex: none;
  width: 12px;
  height: 12px;
  margin: 0;
  border: 1px solid #b0b0b0;
  background: #fff;
  display: grid;
  place-items: center;
  &:checked::after { content: "✖"; font: 12px/10px "DejaVu Sans", sans-serif; color: #000; }
`;
const Swatch = styled.span<{ $c: string }>`
  width: 16px;
  height: 16px;
  border: 1px solid #0003;
  background: ${(p) => p.$c};
`;
const Canvas = styled.section`
  position: relative;
  flex: 1;
  margin: 1px 0 1px 6px;
  background: #fff;
  border: 1px solid #b5b5b5;
  border-right: 0;
  overflow: hidden;
`;
const MapDrawing = styled.svg`
  position: absolute;
  left: 0;
  top: 0;
  width: 978px;
  height: 796px;
`;

/* ---------- status bar and taskbar ---------- */

const Status = styled.footer`
  height: 30px;
  display: flex;
  align-items: center;
  padding: 0 14px 0 5px;
  gap: 6px;
  white-space: nowrap;
`;
const fieldBox = css`
  height: 20px;
  padding: 0 4px;
  border: 1px solid #b3b3b3;
  border-radius: 3px;
  background: #fff;
`;
const Coords = styled.input`
  ${fieldBox}
  flex: 1;
  min-width: 60px;
  text-align: center;
`;
const Spin = styled.span`
  display: flex;
  width: 98px;
  height: 24px;
  border: 1px solid #b3b3b3;
  border-radius: 3px;
  background: #fff;
  input { flex: 1; min-width: 0; border: 0; padding: 0 4px; background: none; }
`;
const SpinButtons = styled.span`
  width: 15px;
  display: grid;
  grid-template-rows: 1fr 1fr;
  border-left: 1px solid #b3b3b3;
`;
const Arrow = styled.span<{ $d: "up" | "down" | "left" | "right"; $s?: number }>`
  display: block;
  flex: none;
  width: 0;
  height: 0;
  border: ${(p) => p.$s ?? 4}px solid transparent;
  ${(p) => p.$d === "up" && "border-bottom-color:#111;border-top:0;"}
  ${(p) => p.$d === "down" && "border-top-color:#111;border-bottom:0;"}
  ${(p) => p.$d === "left" && "border-right-color:#111;border-left:0;"}
  ${(p) => p.$d === "right" && "border-left-color:#111;border-right:0;"}
`;
const SpinButton = styled.button`
  padding: 0;
  border: 0;
  background: linear-gradient(#fff, #e6e6e6);
  display: grid;
  place-items: center;
  & + & { border-top: 1px solid #b3b3b3; }
`;
const SelectBox = styled.span<{ $w: number }>`
  flex: none;
  width: ${(p) => p.$w}px;
  height: 20px;
  display: grid;
  grid-template-columns: 1fr 16px;
  border: 1px solid #b3b3b3;
  border-radius: 3px;
  background: linear-gradient(#fdfdfd, #ebebeb);
  select {
    grid-area: 1 / 1 / 2 / 3;
    appearance: none;
    min-width: 0;
    border: 0;
    padding: 0 16px 0 3px;
    background: none;
  }
`;
const SelectArrow = styled.i`
  grid-area: 1 / 2 / 2 / 3;
  pointer-events: none;
  border-left: 1px solid #b3b3b3;
  display: grid;
  place-items: center;
`;
const MouseButton = styled.button`
  width: 20px;
  height: 22px;
  padding: 0;
  border: 1px solid #888;
  border-radius: 3px;
  background: #e4e4e4;
  display: grid;
  place-items: center;
`;
const Crs = styled.button`
  display: flex;
  align-items: center;
  gap: 4px;
  margin: 0 17px 0 13px;
  padding: 0;
  border: 0;
  background: none;
`;
const Check = styled.span`
  display: flex;
  align-items: center;
  gap: 5px;
  padding-left: 2px;
`;

const Taskbar = styled.footer`
  height: 30px;
  display: flex;
  align-items: center;
  background: linear-gradient(#4670bb 0, #3558a6 3px, #2c4d9b 45%, #1d3476);
  border-top: 1px solid #5f86cb;
  color: #fff;
  font: 12px/16px "Liberation Sans", sans-serif;
  white-space: nowrap;
`;
const Orb = styled.button`
  flex: none;
  width: 34px;
  height: 30px;
  margin: 0 17px 0 7px;
  padding: 0;
  border: 0;
  background: none;
  svg { width: 34px; height: 30px; }
`;
const Launch = styled.button`
  flex: none;
  width: 23px;
  height: 24px;
  padding: 0;
  border: 0;
  background: none;
  display: grid;
  place-items: center;
`;
const Tasks = styled.div`
  display: flex;
  flex: none;
  align-items: center;
  margin-left: 47px;
`;
const Task = styled.button<{ $active?: boolean; $last?: boolean }>`
  flex: none;
  width: ${(p) => (p.$last ? 147 : 160)}px;
  height: 29px;
  display: flex;
  align-items: center;
  gap: 5px;
  padding: 0 0 0 9px;
  border: 0;
  border-radius: 3px;
  background: ${(p) => (p.$active ? "linear-gradient(#1c46a6, #12327f)" : "none")};
  color: #fff;
  font: inherit;
  b { color: #e0404a; font-weight: 400; margin-right: -2px; }
`;
const Tray = styled.div`
  margin-left: auto;
  display: flex;
  align-items: center;
  gap: 2px;
  padding-right: 8px;
`;
const Lang = styled.span`
  padding: 0 2px;
  margin-right: 5px;
  background: #2a6f96;
`;
const TrayHelp = styled.span`
  width: 13px;
  margin-right: 9px;
  background: #fff;
  color: #111;
  font-weight: 700;
  line-height: 14px;
  text-align: center;
`;
const Clock = styled.time`margin-left: 7px;`;
const White = styled.i`
  border: 4px solid transparent;
  border-top-color: #fff;
  border-bottom: 0;
`;

/* ---------- layer properties dialog ---------- */

const Dialog = styled.section`
  position: absolute;
  top: 119px;
  left: 226px;
  right: 41px;
  border: 3px solid #21419b;
  border-top: 0;
  border-right-width: 4px;
  border-bottom-width: 4px;
  border-radius: 7px 7px 0 0;
  outline: 1px solid #0a1a50;
  outline-offset: -1px;
  background: #f3f3f3;
`;
const DialogTitle = styled.header`
  height: 28px;
  margin: 0 -4px 0 -3px;
  padding: 0 4px 0 6px;
  display: flex;
  align-items: center;
  gap: 6px;
  border-radius: 7px 7px 0 0;
  border-top: 1px solid #0a1440;
  background: linear-gradient(#6f8fe0, #3c5cb4 40%, #1c3580 65%, #182e74);
  color: #fff;
  font: bold 12px/16px "Liberation Sans", sans-serif;
`;
const DialogBody = styled.div`display: flex;`;
const Sidebar = styled.nav`
  flex: none;
  width: 158px;
  background: #5d5d5d;
`;
const SideItem = styled.button<{ $on?: boolean }>`
  width: 100%;
  height: 34px;
  display: flex;
  align-items: center;
  gap: 7px;
  padding: 0 0 0 ${(p) => (p.$on ? 8 : 5)}px;
  border: 0;
  background: ${(p) => (p.$on ? "#f3f3f3" : "none")};
  color: ${(p) => (p.$on ? "#111" : "#fff")};
  span { padding-top: 3px; }
`;
const VSplit = styled.div`
  flex: none;
  width: 6px;
  display: flex;
  align-items: center;
  justify-content: center;
  &::after {
    content: "";
    width: 4px;
    height: 204px;
    background-image: radial-gradient(circle, #c2c2c2 1px, transparent 1px);
    background-size: 4px 5px;
  }
`;
const Content = styled.div`
  flex: 1;
  min-width: 0;
  padding: 3px 3px 3px 0;
`;
const FormRow = styled.div`
  display: flex;
  align-items: center;
  white-space: nowrap;
`;
const Space = styled.span<{ $w: number }>`flex: none; width: ${(p) => p.$w}px;`;
const InitInput = styled.input`${fieldBox} width: 178px;`;
const Group = styled.fieldset`
  min-width: 0;
  margin: 3px 0 0;
  padding: 8px 10px 10px;
  border: 1px solid #bdbdbd;
  border-radius: 3px;
`;
const Legend = styled.legend`
  height: 20px;
  margin-left: -11px;
  padding: 7px 7px 0 2px;
  display: flex;
  align-items: center;
  gap: 6px;
  background: #f3f3f3;
`;
const FieldTools = styled.div`
  display: flex;
  gap: 6px;
  margin-bottom: 13px;
`;
const FieldTool = styled.button`
  width: 26px;
  height: 25px;
  padding: 0;
  display: grid;
  place-items: center;
  border: 1px solid #9c9c9c;
  border-radius: 3px;
  background: linear-gradient(#fdfdfd, #ececec);
`;
const Frame = styled.div`
  position: relative;
  display: grid;
  grid-template-columns: minmax(0, 1fr) 16px;
  grid-template-rows: auto 16px;
  border: 2px solid #33657a;
  border-right-color: #5c8592;
  border-bottom-color: #6f8f9e;
  border-radius: 3px;
  background: #f3f3f3;
`;
const Viewport = styled.div`overflow: hidden; background: #fff;`;
const Table = styled.table`
  width: 100%;
  table-layout: fixed;
  border-collapse: separate;
  border-spacing: 0;
`;
const Th = styled.th<{ $last?: boolean }>`
  height: 20px;
  padding: ${(p) => (p.$last ? "2px 0 0 16px" : "2px 0 0")};
  font-weight: 400;
  text-align: ${(p) => (p.$last ? "left" : "center")};
  white-space: nowrap;
  background: linear-gradient(#fdfdfd, #e9e9e9);
  border-right: ${(p) => (p.$last ? "0" : "2px solid #989898")};
  border-bottom: 1px solid #8f8f8f;
`;
const SortMark = styled.svg`
  width: 10px;
  height: 10px;
  margin-left: 8px;
`;
const Td = styled.td<{ $short?: boolean; $bare?: boolean }>`
  height: ${(p) => (p.$short ? 24 : 30)}px;
  padding: ${(p) => (p.$bare ? "0" : p.$short ? "0 0 4px 3px" : "2px 0 0 3px")};
  white-space: nowrap;
  overflow: hidden;
  border-right: ${(p) => (p.$bare ? "0" : "1px solid #9a9a9a")};
  border-bottom: 1px solid #9a9a9a;
`;
const IdCell = styled.span`
  display: flex;
  align-items: center;
  gap: 6px;
`;
const EditButton = styled.button<{ $short?: boolean }>`
  display: block;
  width: 100%;
  height: ${(p) => (p.$short ? 23 : 29)}px;
  padding: ${(p) => (p.$short ? "0 0 3px" : "2px 0 0")};
  border: 1px solid #a9a9a9;
  border-width: 1px 2px 1px 1px;
  border-top-color: ${(p) => (p.$short ? "#f2f2f2" : "#c4c4c4")};
  border-radius: 3px;
  background: linear-gradient(#fbfbfb, #dedede);
`;
const hatch = css`
  background: repeating-conic-gradient(#e4e4e4 0 25%, #fafafa 0 50%) 0 0 / 2px 2px;
`;
const VBar = styled.div`
  display: flex;
  flex-direction: column;
  ${hatch}
`;
const HBar = styled.div`
  display: flex;
  ${hatch}
`;
const BarButton = styled.button`
  flex: none;
  width: 16px;
  height: 16px;
  padding: 0;
  display: grid;
  place-items: center;
  border: 1px solid #8f8f8f;
  border-radius: 2px;
  background: linear-gradient(#fff, #ebebeb);
`;
const Track = styled.span<{ $grow: number }>`flex: ${(p) => p.$grow} 1 0;`;
const Thumb = styled.span<{ $grow: number; $v?: boolean }>`
  flex: ${(p) => p.$grow} 1 0;
  display: grid;
  place-items: center;
  border: 1px solid #8f8f8f;
  border-radius: 2px;
  background: linear-gradient(${(p) => (p.$v ? "to right, " : "")}#fff, #e8e8e8);
  &::after {
    content: "";
    width: ${(p) => (p.$v ? 12 : 20)}px;
    height: ${(p) => (p.$v ? 20 : 12)}px;
    background-image: radial-gradient(circle, #c4c4c4 1px, transparent 1px);
    background-size: 4px 4px;
  }
`;
const Marker = styled.svg`
  position: absolute;
  left: 163px;
  top: 341px;
  width: 92px;
  height: 74px;
  pointer-events: none;
`;
const HSplit = styled.div`
  width: 274px;
  height: 8px;
  margin: 0 auto;
  background-image: radial-gradient(circle, #c9c9c9 1px, transparent 1px);
  background-size: 6px 8px;
`;
const Relations = styled.div`
  display: flex;
  align-items: center;
  gap: 9px;
  padding-left: 5px;
  &::after { content: ""; flex: 1; height: 1px; margin-bottom: 5px; background: #8a8a8a; }
`;
const EndRow = styled(FormRow)`
  justify-content: flex-end;
  gap: 6px;
  margin: 10px 0 6px;
`;
const Buttons = styled.div`
  display: flex;
  gap: 10px;
`;
const Push = styled.button<{ $main?: boolean; $start?: boolean }>`
  width: 75px;
  height: 23px;
  display: flex;
  align-items: center;
  justify-content: center;
  gap: 17px;
  margin-right: ${(p) => (p.$start ? "auto" : "0")};
  padding: ${(p) => (p.$start ? "2px 0 0 8px" : "2px 0 0")};
  border: 1px solid ${(p) => (p.$main ? "#666" : "#b5b5b5")};
  border-radius: 3px;
  background: linear-gradient(#fff, #e9e9e9);
`;

/* ---------- data ---------- */

const menus = ["Проекты", "Правка", "Вид", "Слой", "Установки", "Модули", "Вектор", "Растр", "База данных", "Интернет", "Анализ данных", "Справка"];

// "|" is a grip, "v" a drop arrow, "w" a muted one, "/" a divider
const row1 = "page folder save saveAs composerNew composer | touch hand panSel zoomIn zoomOut zoom1 zoomFull zoomSel zoomLayer zoomLast zoomNext refresh | identify gear w select v deselect expr table abacus measure v balloon bookmarkNew bookmark textNote v | book whats".split(" ");
const row2 = "pencils pan saveEdit addFeat moveFeat node trash cut copy paste vecGrey | abc abcPin abcG1 abcG2 abcG3 abcG4 abcG5 | csw | python heat pie field".split(" ");
const row3 = "mapA mapB mapC / grassV grassR grassG".split(" ");
const side = "vector raster postgis feather mssql oracle georaster wms wcs wfs comma newShape gpsNew | cross caliper gps topo topology".split(" ");
const plain = ["postgis", "feather", "mssql", "oracle", "georaster", "wms", "wcs", "wfs", "comma"];
plain.forEach((n) => { drawings[n] = <g>{drawings[n]}{plus}</g>; });

const tabs: [string, string][] = [
  ["tools", "Общие"], ["brush", "Стиль"], ["abcBig", "Подписи"], ["fields", "Поля"], ["broom", "Отрисовка"],
  ["bubble", "Вывод"], ["actions", "Действия"], ["joins", "Связи"], ["diagrams", "Диаграммы"], ["info", "Метаданные"],
];
const columns: [string, number | undefined][] = [
  ["ID", 46], ["Имя", 74], ["Тип", 53], ["Описание типа", 117], ["Размер", 75], ["Точность", 88],
  ["Комментарий", 110], ["Элемент редактирования", 184], ["Псевд", undefined],
];
const rows = [
  [3, "ADMIN_NAME", "QString", "String", 42, 0], [4, "DENS_IND", "QString", "String", 4, 0],
  [5, "DENS_ID", "double", "Real", 11, 0], [6, "DENSITY", "double", "Real", 20, 5],
  [7, "AREA", "double", "Real", 20, 5], [8, "PERIMETER", "double", "Real", 20, 5],
  [9, "X_COORD", "double", "Real", 18, 5], [10, "Y_COORD", "double", "Real", 18, 5],
  [11, "NULL", "double", "Real", 16, 0], [12, "regions_li", "QString", "String", 254, 0],
  [13, "regions__1", "QString", "String", 254, 0], [14, "2013", "double", "Real", 10, 1],
  [15, "2014", "double", "Real", 10, 1],
];
const quick = ["monitor", "net", "disk", "firefox", "excel", "pdf", "word", "chrome", "mendeley", "rlang", "cbox", "qgis"];

/* Region outline: coarse points, roughened so that the border looks surveyed. */
const coast = [363,740,363,762,356,768,349,783,352,787,362,791,370,793,377,800,389,812,395,818,390,830,386,850,385,865,379,880,378,892,385,896,387,889,393,884,407,878,419,884,424,889,429,886,437,878,448,871,452,860,455,848,475,844,495,843,515,838,540,837,560,838,580,841,610,846,640,852,665,858,670,862,672,871,690,873,700,868,710,870,720,878,735,884,752,888,765,891,770,898,764,905,770,911,776,903,778,893,790,889,797,894,803,900,806,893,810,884,820,884,830,895,838,900,848,896,855,888,860,892,858,908,862,917,868,905,868,895,878,886,884,893,888,903,894,896,902,905,908,898,914,906,920,917,926,921,930,915,936,905,941,893,950,889,957,890,960,905,966,908,975,897,985,895,995,898,1002,905,1008,915,1016,924,1028,932,1036,935,1042,927,1043,915,1037,905,1028,898,1030,885,1036,875,1040,862,1047,845,1060,838,1068,832,1067,818,1080,806,1092,800,1110,802,1130,802,1142,800,1142,793,1130,785,1122,778,1117,770,1125,762,1125,740];
const inner = [726,740,724,762,728,768,725,775,735,785,745,795,753,797,750,812,757,822,752,835,756,850,750,862,752,888];
const rough = (pts: number[]) => {
  let d = `M${pts[0]} ${pts[1]}`;
  for (let i = 2; i < pts.length; i += 2) {
    const [x0, y0, x1, y1] = pts.slice(i - 2, i + 2);
    const n = Math.max(1, Math.round(Math.hypot(x1 - x0, y1 - y0) / 4));
    for (let k = 1; k <= n; k++) {
      const j = k === n ? 0 : ((i * 7 + k * 13) % 5) - 2;
      d += `L${(x0 + ((x1 - x0) * k) / n + j * 0.4).toFixed(1)} ${(y0 + ((y1 - y0) * k) / n - j * 0.5).toFixed(1)}`;
    }
  }
  return d;
};

const Tools = ({ items }: { items: string[] }) => (
  <ToolRow>
    <LeadGrip />
    {items.map((n, i) =>
      n === "|" ? <Grip key={i} /> :
      n === "/" ? <Divider key={i} /> :
      n === "v" || n === "w" ? <Drop key={i} $muted={n === "w"} aria-label="more" /> :
      <ToolButton key={i} $pressed={n === "touch"} aria-label={n}><Icon name={n} /></ToolButton>
    )}
  </ToolRow>
);

const CloseMark = ({ stroke }: { stroke: string }) => (
  <Svg viewBox="0 0 12 12" $size={11}><path d="M2 2l8 8M10 2l-8 8" stroke={stroke} strokeWidth="4.500" /><path d="M2 2l8 8M10 2l-8 8" stroke="#fff" strokeWidth="2.500" /></Svg>
);

const FieldsTable = () => (
  <Frame>
    <Viewport>
      <Table>
        <colgroup>{columns.map(([n, w]) => <col key={n} style={{ width: w }} />)}</colgroup>
        <thead>
          <tr>
            {columns.map(([n], i) => (
              <Th key={n} $last={i === 8}>
                {n}
                {i === 0 && <SortMark viewBox="0 0 10 10"><path d="M1 10L6 1" stroke="#aaa" fill="none" /></SortMark>}
              </Th>
            ))}
          </tr>
        </thead>
        <tbody>
          {rows.map((r, i) => (
            <tr key={r[0]}>
              {r.map((c, k) => (
                <Td key={k} $short={i === 0}>
                  {k === 0 ? <IdCell><Icon name="rowIcon" size={16} /><span>{c}</span></IdCell> : c}
                </Td>
              ))}
              <Td $short={i === 0} />
              <Td $short={i === 0} $bare><EditButton $short={i === 0}>Текстовое поле</EditButton></Td>
              <Td $short={i === 0} $bare />
            </tr>
          ))}
        </tbody>
      </Table>
    </Viewport>
    <VBar>
      <BarButton aria-label="up"><Arrow $d="up" /></BarButton>
      <Track $grow={89} />
      <Thumb $grow={267} $v />
      <BarButton aria-label="up"><Arrow $d="up" /></BarButton>
      <BarButton aria-label="down"><Arrow $d="down" /></BarButton>
    </VBar>
    <HBar>
      <BarButton aria-label="left"><Arrow $d="left" /></BarButton>
      <Thumb $grow={544} />
      <Track $grow={205} />
      <BarButton aria-label="left"><Arrow $d="left" /></BarButton>
      <BarButton aria-label="right"><Arrow $d="right" /></BarButton>
    </HBar>
    <Marker viewBox="0 0 92 74">
      <path d="M2 20C2 6 20 0 32 2C38 2 40 5 44 6C66 6 90 16 91 30C90 44 84 58 74 66C62 76 40 76 24 68C14 62 2 52 1 38C0 30 1 26 2 20Z" fill="#fff200" fillOpacity=".45" />
    </Marker>
  </Frame>
);

const PropertiesDialog = () => (
  <Dialog role="dialog" aria-labelledby="dlg">
    <DialogTitle>
      <Icon name="qgis" size={15} />
      <span id="dlg">Свойства слоя — obl_bel_lifelong | Поля</span>
      <WinButtons>
        <WinButton $w={25} $h={17} $bg="linear-gradient(#dfe4ee, #9fabc4)" aria-label="help">
          <Svg viewBox="0 0 12 14" $size={13}><path d="M3 5q0-3 3-3t3 3q0 2-3 3v1.500M6 11.500v1.500" fill="none" stroke="#445" strokeWidth="3.500" /><path d="M3 5q0-3 3-3t3 3q0 2-3 3v1.500M6 11.500v1.500" fill="none" stroke="#fff" strokeWidth="1.600" /></Svg>
        </WinButton>
        <WinButton $w={42} $h={17} $bg="linear-gradient(#e79a96, #c53a35 50%, #d4605a)" aria-label="close"><CloseMark stroke="#733" /></WinButton>
      </WinButtons>
    </DialogTitle>
    <DialogBody>
      <Sidebar>
        {tabs.map(([icon, name]) => (
          <SideItem key={name} $on={name === "Поля"}><Icon name={icon} /><span>{name}</span></SideItem>
        ))}
      </Sidebar>
      <VSplit />
      <Content>
        <FormRow>
          <label htmlFor="form">Форма редактирования:</label>
          <Space $w={3} />
          <SelectBox $w={182}>
            <select id="form"><option>Создавать автоматически</option></select>
            <SelectArrow><Arrow $d="down" /></SelectArrow>
          </SelectBox>
          <Space $w={31} />
          <label htmlFor="init">Функция инициализации</label>
          <Space $w={3} />
          <InitInput id="init" />
        </FormRow>
        <Group>
          <Legend><Arrow $d="down" $s={6} />Поля</Legend>
          <FieldTools>
            <FieldTool aria-label="add column"><Icon name="colGrey" size={16} /></FieldTool>
            <FieldTool aria-label="delete column"><Icon name="colGrey" size={16} /></FieldTool>
            <FieldTool aria-label="edit"><Icon name="pencil" size={16} /></FieldTool>
            <FieldTool aria-label="calculator"><Icon name="abacus" size={16} /></FieldTool>
          </FieldTools>
          <FieldsTable />
        </Group>
        <HSplit />
        <Relations><Arrow $d="right" $s={6} />Отношения</Relations>
        <EndRow>
          <label htmlFor="suppress">Отключить форму ввода атрибутов для каждого создаваемого объекта</label>
          <SelectBox $w={102}>
            <select id="suppress"><option>По умолчанию</option></select>
            <SelectArrow><Arrow $d="down" /></SelectArrow>
          </SelectBox>
        </EndRow>
        <Buttons>
          <Push $start>Стиль<Arrow $d="down" $s={3} /></Push>
          <Push $main>OK</Push>
          <Push>Отмена</Push>
          <Push>Применить</Push>
          <Push>Справка</Push>
        </Buttons>
      </Content>
    </DialogBody>
  </Dialog>
);

export default function App() {
  return (
    <Shell>
      <Global />
      <AppTitle>
        <Icon name="qgis" size={16} />
        <span>QGIS2.8.1-Wien - qgis_how_attr_add_to_vector</span>
        <WinButtons>
          <WinButton $w={25} $h={14} $bg="#bccdd6" aria-label="minimize"><Svg viewBox="0 0 12 12" $size={12}><rect x="0.500" y="6" width="11" height="4" fill="#fff" stroke="#444" /></Svg></WinButton>
          <WinButton $w={26} $h={14} $bg="#d3dcec" aria-label="restore"><Svg viewBox="0 0 12 12" $size={12}><path d="M3.500.5h8v7h-8zM.5 3.500h8v7h-8zM3 6h3v2H3z" fill="#fff" stroke="#555" /></Svg></WinButton>
          <WinButton $w={42} $h={14} $bg="#e9d3e2" aria-label="close"><CloseMark stroke="#645a66" /></WinButton>
        </WinButtons>
      </AppTitle>
      <MenuBar>{menus.map((m) => <MenuItem key={m}>{m}</MenuItem>)}</MenuBar>
      <Tools items={row1} />
      <Tools items={row2} />
      <Tools items={row3} />
      <Main>
        <SideTools>
          <SideGrip />
          {side.map((n, i) =>
            n === "|" ? <SideGrip key={i} /> : (
              <SideRow key={i}>
                <ToolButton aria-label={n}><Icon name={n} /></ToolButton>
                {n === "newShape" && <Drop aria-label="more" />}
              </SideRow>
            )
          )}
        </SideTools>
        <Layers>
          <LayersTitle>Слои</LayersTitle>
          <LayerTools>
            {["group", "eye", "funnel", "expand", "collapse", "sheet"].map((n) => (
              <LayerTool key={n} aria-label={n}><Icon name={n} size={16} /></LayerTool>
            ))}
          </LayerTools>
          <Tree>
            <TreeRow><Icon name="sheet" size={15} />regions_lifelong</TreeRow>
            <TreeRow $active>
              <Tick type="checkbox" id="l1" defaultChecked /><Swatch $c="#641fb4" /><label htmlFor="l1">obl_bel_lifelong</label>
            </TreeRow>
            <TreeRow>
              <Tick type="checkbox" id="l2" defaultChecked /><Swatch $c="#d3c565" /><label htmlFor="l2">obl_bel</label>
            </TreeRow>
          </Tree>
        </Layers>
        <Canvas>
          <MapDrawing viewBox="302 166 978 796">
            <path d={rough(coast)} fill="#7f03cb" stroke="#1b0030" strokeWidth="1" />
            <path d={rough(inner)} fill="none" stroke="#1b0030" strokeWidth="1.200" />
            <path d="M708 760l8 8 4-2 6 6 2 8M762 760l8 5 12 1 8-4" fill="none" stroke="#1b0030" strokeWidth="1.200" />
          </MapDrawing>
        </Canvas>
      </Main>
      <Status>
        <span>Переключить текущий слой в режим редактирования</span>
        <MouseButton aria-label="extents"><Icon name="mouse" size={16} /></MouseButton>
        <label htmlFor="xy">Координаты:</label>
        <Coords id="xy" defaultValue="227059,6224710" />
        <label htmlFor="scale">Масштаб</label>
        <SelectBox $w={87}>
          <select id="scale"><option>1:2 804 085</option></select>
          <SelectArrow><Arrow $d="down" /></SelectArrow>
        </SelectBox>
        <label htmlFor="rot">Вращение:</label>
        <Spin>
          <input id="rot" defaultValue="0,0" />
          <SpinButtons>
            <SpinButton aria-label="up"><Arrow $d="up" /></SpinButton>
            <SpinButton aria-label="down"><Arrow $d="down" /></SpinButton>
          </SpinButtons>
        </Spin>
        <Check><Tick type="checkbox" id="render" defaultChecked /><label htmlFor="render">Отрисовка</label></Check>
        <Crs><Icon name="crs" size={15} />EPSG:32635 (OTF)</Crs>
        <Icon name="chat" size={18} />
      </Status>
      <Taskbar>
        <Orb aria-label="start">
          <svg viewBox="0 0 34 30">
            <circle cx="17" cy="16" r="15.500" fill="#2f5f92" stroke="#12264f" />
            <ellipse cx="17" cy="9" rx="12" ry="8" fill="#8fb4cf" opacity=".7" />
            <path d="M9 9q4-2 7 0l-1 6q-4-2-7 0z" fill="#e2612b" /><path d="M17 9q4 2 8 0l-2 6q-3 2-7 0z" fill="#8cc23f" />
            <path d="M8 16q4-2 7 0l-1 7q-4-2-7 0z" fill="#4a9be0" /><path d="M16 16q4 2 7 0l-1 7q-4 2-7 0z" fill="#f5c93b" />
          </svg>
        </Orb>
        {quick.map((n) => <Launch key={n} aria-label={n}><Icon name={n} size={15} /></Launch>)}
        <Tasks>
          <Task><Icon name="chrome" size={15} />Ожидаемая продо...</Task>
          <Task><Icon name="commander" size={15} />Total Commander 7...</Task>
          <Task $active><Icon name="qgis" size={15} />QGIS2.8.1-Wien - q...</Task>
          <Task $last><Icon name="excel" size={15} /><b>2</b> Microsoft Office ...</Task>
          <White />
        </Tasks>
        <Tray>
          <Lang>EN</Lang>
          <TrayHelp>?</TrayHelp>
          <Svg viewBox="0 0 10 20" $size={18}><path d="M3 2h6v4H3zM1 4h6v4H1z" fill="#35529a" stroke="#fff" /><path d="M2 15h6l-3 3z" fill="#fff" /></Svg>
          <Svg viewBox="0 0 12 12" $size={12}><path d="M8 2L4 6l4 4" stroke="#fff" strokeWidth="2" fill="none" /></Svg>
          <Icon name="usb" size={16} />
          <Icon name="redRing" size={16} />
          <Icon name="orangeRing" size={16} />
          <Clock>14:58</Clock>
        </Tray>
      </Taskbar>
      <PropertiesDialog />
    </Shell>
  );
}
